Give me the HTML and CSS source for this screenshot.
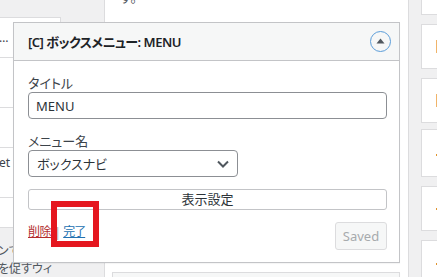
FILE: index.html
```html
<!DOCTYPE html>
<html lang="ja">
<head>
<meta charset="utf-8">
<title>Widget</title>
<link rel="stylesheet" href="styles.css">
</head>
<body>
<div class="page">
  <div class="avail">
    <div class="avail-box">
      <div class="arow h40"><span class="atext">…</span></div>
      <div class="arow h50"></div>
      <div class="arow h40"></div>
      <div class="arow h50 top"><span class="atext">et</span></div>
      <div class="arow h30"></div>
    </div>
    <div class="avail-tail">
      <div class="tline">ンで</div>
      <div class="tline">を促すウィ</div>
    </div>
  </div>

  <div class="sidebar">
    <p class="sb-desc">す。</p>
    <div class="widget open">
      <div class="wtop">
        <h3 class="wtitle">[C] ボックスメニュー: MENU</h3>
        <button class="toggle" aria-label="閉じる">
          <svg width="9" height="6" viewBox="0 0 9 6"><path d="M0.5 5.5 L4.5 0.5 L8.5 5.5 Z" fill="#50575e"/></svg>
        </button>
      </div>
      <div class="winside">
        <label class="flabel">タイトル</label>
        <input class="finput" type="text" value="MENU">
        <label class="flabel second">メニュー名</label>
        <div class="fselect">
          <span>ボックスナビ</span>
          <svg class="chev" width="12" height="8" viewBox="0 0 12 8"><path d="M1 1.5 L6 6.5 L11 1.5" fill="none" stroke="#50575e" stroke-width="2"/></svg>
        </div>
        <button class="fbutton">表示設定</button>
        <div class="wactions">
          <div class="links"><a class="del" href="#">削除</a><span class="sep">|</span><a class="done" href="#">完了</a></div>
          <button class="saved" disabled>Saved</button>
        </div>
      </div>
    </div>
    <div class="widget closed"></div>
  </div>

  <div class="rightcol">
    <div class="card c0"></div>
    <div class="card c1"><i class="bar"></i></div>
    <div class="card c2"><i class="bar"></i></div>
    <div class="card c3"><i class="dot"></i></div>
    <div class="card c4"><i class="dot"></i></div>
    <div class="card c5"><i class="dot"></i></div>
  </div>

  <div class="highlight"></div>
</div>
</body>
</html>
```

FILE: styles.css
```css
* { box-sizing: border-box; }
body {
  margin: 0;
  background: #f0f0f1;
  font-family: "Noto Sans", "Noto Sans CJK JP", sans-serif;
  font-feature-settings: "palt";
  font-size: 13px;
  color: #3c434a;
}
.page {
  position: relative;
  display: grid;
  grid-template-columns: 104px 305px 28px;
  width: 437px;
  height: 277px;
  overflow: hidden;
}

/* left: available widgets (behind) */
.avail { padding-top: 17px; }
.avail-box {
  width: 61px;
  background: #fff;
  border-top: 1px solid #dcdcde;
  border-right: 1px solid #dcdcde;
}
.arow {
  border-bottom: 1px solid #dcdcde;
  display: flex;
  align-items: center;
  font-size: 12px;
  color: #3c434a;
}
.arow.top { align-items: flex-start; padding-top: 6px; }
.h40 { height: 40px; }
.h50 { height: 50px; }
.h30 { height: 30px; }
.atext { margin-left: -1px; }
.avail-tail {
  padding-top: 14px;
  font-size: 12px;
  line-height: 18px;
  color: #50575e;
  white-space: nowrap;
}
.tline { margin-left: -2px; }

/* sidebar */
.sidebar {
  background: #fff;
  border-left: 1px solid #dcdcde;
  border-right: 1px solid #dcdcde;
  padding: 0 8px 0 7px;
  min-width: 0;
}
.sb-desc {
  margin: -12px 0 0 8px;
  height: 34px;
  line-height: 18px;
  color: #50575e;
}
.widget {
  background: #fff;
  border: 1px solid #c3c4c7;
  box-shadow: 0 1px 1px rgba(0,0,0,.04);
}
.widget.open {
  position: relative;
  z-index: 2;
  margin-left: -99px;
  width: 387px;
}
.widget.closed {
  margin-top: 9px;
  height: 40px;
  background: #f6f7f7;
  border-color: #dcdcde;
}
.wtop {
  height: 38px;
  background: #f6f7f7;
  border-bottom: 1px solid #c3c4c7;
  display: flex;
  align-items: center;
  justify-content: space-between;
  padding: 0 8px 1px 14px;
}
.wtitle {
  margin: 0;
  font-size: 13px;
  font-weight: 600;
  letter-spacing: -0.5px;
  color: #1d2327;
}
.toggle {
  width: 21px;
  height: 21px;
  border-radius: 50%;
  border: 1.5px solid #5b9dd9;
  background: transparent;
  padding: 0;
  display: flex;
  align-items: center;
  justify-content: center;
}
.toggle svg { margin-top: -1px; }

.winside {
  padding: 14px 12px 12px 14px;
  display: flex;
  flex-direction: column;
}
.flabel {
  display: block;
  line-height: 17px;
  color: #3c434a;
}
.flabel.second { margin-top: 13px; line-height: 18px; }
.finput {
  height: 27px;
  width: 100%;
  border: 1px solid #8c8f94;
  border-radius: 4px;
  padding: 0 7px;
  font-family: inherit;
  font-size: 13px;
  color: #2c3338;
  background: #fff;
}
.fselect {
  width: 210px;
  height: 27px;
  border: 1px solid #8c8f94;
  border-radius: 4px;
  padding: 0 7px 0 8px;
  display: flex;
  align-items: center;
  justify-content: space-between;
  color: #2c3338;
}
.chev { margin-right: 1px; }
.fbutton {
  margin-top: 12px;
  height: 21px;
  width: 100%;
  border: 1px solid #c3c4c7;
  border-radius: 3px;
  background: #fff;
  font-family: inherit;
  font-size: 13px;
  line-height: 19px;
  color: #2c3338;
  padding: 0;
}
.wactions {
  margin-top: 12px;
  display: flex;
  justify-content: space-between;
  align-items: flex-start;
}
.links {
  margin-top: 1px;
  line-height: 18px;
  display: flex;
  font-size: 12px;
}
.del { color: #b32d2e; text-decoration: underline; letter-spacing: -0.5px; }
.sep { color: #a7aaad; margin: 0 2px 0 3px; font-size: 13px; }
.done { color: #2271b1; text-decoration: underline; letter-spacing: -1px; }
.saved {
  width: 52px;
  height: 28px;
  border: 1px solid #dcdcde;
  border-radius: 3px;
  background: #f6f7f7;
  color: #a7aaad;
  font-family: inherit;
  font-size: 13px;
  padding: 0;
}

/* right column */
.rightcol { padding-left: 12px; }
.card {
  background: #fff;
  border: 1px solid #dcdcde;
  width: 40px;
  padding-left: 14px;
}
.c0 { height: 30px; margin-top: -15px; }
.c1 { height: 45px; margin-top: 9px; padding-top: 15px; }
.c2 { height: 45px; margin-top: 9px; padding-top: 15px; }
.c3 { height: 48px; margin-top: 6px; padding-top: 24px; }
.c4 { height: 45px; margin-top: 9px; padding-top: 21px; }
.c5 { height: 45px; margin-top: 9px; padding-top: 22px; }
.bar { display: block; width: 2px; height: 13px; background: #f0b46a; }
.dot { display: block; width: 2px; height: 2px; background: #e0942e; }

/* annotation overlay */
.highlight {
  position: absolute;
  left: 51px;
  top: 201px;
  width: 48px;
  height: 46px;
  border: 6px solid #e5171f;
  z-index: 5;
}
```
